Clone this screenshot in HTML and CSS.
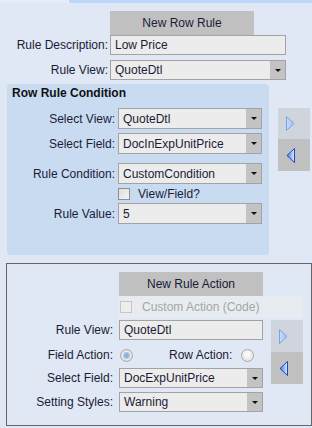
FILE: index.html
```html
<!DOCTYPE html>
<html lang="en">
<head>
    <meta charset="UTF-8">
    <meta name="viewport" content="width=device-width, initial-scale=1.0">
    <title>Row Rules</title>
    <link rel="stylesheet" href="styles.css">
</head>
<body>
    <div class="topbar">
        <div class="topbar-left"></div>
        <div class="topbar-right"></div>
    </div>

    <div class="rule">
        <div class="btn">New Row Rule</div>
        <div class="row">
            <span class="label">Rule Description:</span>
            <div class="field"><span class="value">Low Price</span></div>
        </div>
        <div class="row gap5">
            <span class="label">Rule View:</span>
            <div class="field"><span class="value">QuoteDtl</span><span class="drop"></span></div>
        </div>
    </div>

    <div class="condition-area">
        <div class="condition">
            <h2>Row Rule Condition</h2>
            <div class="row first">
                <span class="label">Select View:</span>
                <div class="field"><span class="value">QuoteDtl</span><span class="drop"></span></div>
            </div>
            <div class="row gap4">
                <span class="label">Select Field:</span>
                <div class="field"><span class="value">DocInExpUnitPrice</span><span class="drop"></span></div>
            </div>
            <div class="row gap9">
                <span class="label">Rule Condition:</span>
                <div class="field"><span class="value">CustomCondition</span><span class="drop"></span></div>
            </div>
            <div class="check-row">
                <span class="checkbox"></span>
                <span class="check-text">View/Field?</span>
            </div>
            <div class="row">
                <span class="label">Rule Value:</span>
                <div class="field"><span class="value">5</span><span class="drop"></span></div>
            </div>
        </div>
        <div class="arrows">
            <div class="arrow-cell light">
                <svg width="9" height="15" viewBox="0 0 9 15">
                    <defs>
                        <linearGradient id="gr1" x1="0" y1="0" x2="1" y2="0">
                            <stop offset="0" stop-color="#c9ddfb"/>
                            <stop offset="1" stop-color="#9dbdf0"/>
                        </linearGradient>
                    </defs>
                    <polygon points="0.5,0.5 8,7.5 0.5,14.5" fill="url(#gr1)" stroke="#7aa3e4"/>
                </svg>
            </div>
            <div class="arrow-cell dark">
                <svg width="9" height="15" viewBox="0 0 9 15">
                    <defs>
                        <linearGradient id="gl1" x1="0" y1="0" x2="1" y2="0">
                            <stop offset="0" stop-color="#3a76e6"/>
                            <stop offset="1" stop-color="#e4eeff"/>
                        </linearGradient>
                    </defs>
                    <polygon points="8.5,0.5 1,7.5 8.5,14.5" fill="url(#gl1)" stroke="#1846c4"/>
                </svg>
            </div>
        </div>
    </div>

    <div class="action">
        <div class="action-head">
            <div class="btn">New Rule Action</div>
            <div class="custom">
                <span class="checkbox disabled"></span>
                <span class="custom-text">Custom Action (Code)</span>
            </div>
        </div>
        <div class="action-body">
            <div class="action-form">
                <div class="row">
                    <span class="label">Rule View:</span>
                    <div class="field"><span class="value">QuoteDtl</span></div>
                </div>
                <div class="radio-row">
                    <span class="label">Field Action:</span>
                    <span class="radio on"></span>
                    <span class="radio-label">Row Action:</span>
                    <span class="radio"></span>
                </div>
                <div class="row gap4">
                    <span class="label">Select Field:</span>
                    <div class="field"><span class="value">DocExpUnitPrice</span><span class="drop"></span></div>
                </div>
                <div class="row gap4">
                    <span class="label">Setting Styles:</span>
                    <div class="field"><span class="value">Warning</span><span class="drop"></span></div>
                </div>
            </div>
            <div class="arrows">
                <div class="arrow-cell light tall">
                    <svg width="9" height="15" viewBox="0 0 9 15">
                        <defs>
                            <linearGradient id="gr2" x1="0" y1="0" x2="1" y2="0">
                                <stop offset="0" stop-color="#c9ddfb"/>
                                <stop offset="1" stop-color="#9dbdf0"/>
                            </linearGradient>
                        </defs>
                        <polygon points="0.5,0.5 8,7.5 0.5,14.5" fill="url(#gr2)" stroke="#7aa3e4"/>
                    </svg>
                </div>
                <div class="arrow-cell dark">
                    <svg width="9" height="15" viewBox="0 0 9 15">
                        <defs>
                            <linearGradient id="gl2" x1="0" y1="0" x2="1" y2="0">
                                <stop offset="0" stop-color="#3a76e6"/>
                                <stop offset="1" stop-color="#e4eeff"/>
                            </linearGradient>
                        </defs>
                        <polygon points="8.5,0.5 1,7.5 8.5,14.5" fill="url(#gl2)" stroke="#1846c4"/>
                    </svg>
                </div>
            </div>
        </div>
    </div>
</body>
</html>
```

FILE: styles.css
```css
body {
    margin: 0;
    background-color: #dfe8f4;
    font-family: "Liberation Sans", Arial, sans-serif;
    font-size: 12px;
    color: #1b1b36;
    width: 312px;
    height: 428px;
    overflow: hidden;
}
.topbar {
    display: flex;
    height: 3px;
}
.topbar-left {
    width: 69px;
    background-color: #e4eefa;
}
.topbar-right {
    flex: 1;
    background-color: #bbd8fa;
}
.btn {
    width: 144px;
    height: 24px;
    background-color: #c0c0c0;
    display: flex;
    align-items: center;
    justify-content: center;
}
.row {
    display: flex;
    align-items: center;
}
.gap4 {
    margin-top: 4px;
}
.gap5 {
    margin-top: 5px;
}
.gap9 {
    margin-top: 9px;
}
.label {
    flex: none;
    box-sizing: border-box;
    text-align: right;
    white-space: nowrap;
}
.field {
    box-sizing: border-box;
    height: 20px;
    border: 1px solid #a3a3a3;
    background-color: #ececec;
    display: flex;
    align-items: stretch;
}
.value {
    flex: 1;
    display: flex;
    align-items: center;
    padding-left: 4px;
}
.drop {
    width: 15px;
    background-color: #c3c3c3;
    display: flex;
    align-items: center;
    justify-content: center;
}
.drop::after {
    content: "";
    border-left: 3px solid transparent;
    border-right: 3px solid transparent;
    border-top: 3px solid #111;
}

/* top rule section */
.rule {
    padding-top: 8px;
}
.rule .btn {
    margin-left: 110px;
}
.rule .label {
    width: 110px;
    padding-right: 2px;
}
.rule .field {
    width: 176px;
}

/* condition panel */
.condition-area {
    display: flex;
    margin-top: 4px;
    padding-left: 7px;
}
.condition {
    box-sizing: border-box;
    width: 262px;
    height: 171px;
    background-color: #c9dbf0;
    border-radius: 4px;
    padding-top: 2px;
}
.condition h2 {
    margin: 0;
    font-size: 12px;
    line-height: 15px;
    padding-left: 5px;
    color: #111;
}
.condition .first {
    margin-top: 7px;
}
.condition .label {
    width: 111px;
    padding-right: 3px;
}
.condition .field {
    width: 144px;
    height: 21px;
}
.check-row {
    display: flex;
    align-items: center;
    height: 19px;
    padding-left: 111px;
}
.checkbox {
    box-sizing: border-box;
    width: 12px;
    height: 12px;
    border: 1px solid #8e8e8e;
    background: linear-gradient(135deg, #dcdcdc, #f6f6f6);
}
.checkbox.disabled {
    border-color: #c6c6c6;
    background: #eeeeee;
}
.check-text {
    margin-left: 8px;
}
.arrows {
    flex: none;
    width: 32px;
    margin-left: 9px;
    margin-top: 24px;
}
.arrow-cell {
    height: 31px;
    display: flex;
    align-items: center;
    padding-left: 8px;
}
.arrow-cell.tall {
    height: 32px;
}
.arrow-cell.dark {
    height: 32px;
    background-color: #c0c0c0;
}
.arrow-cell.light {
    background-color: #d0d4dc;
}

/* action box */
.action {
    box-sizing: border-box;
    width: 306px;
    height: 163px;
    margin: 8px 0 0 6px;
    border: 1px solid #666;
}
.action-head {
    padding: 8px 0 0 112px;
}
.custom {
    width: 184px;
    height: 22px;
    background-color: #e8ecf1;
    display: flex;
    align-items: center;
}
.custom .checkbox {
    margin-left: 1px;
}
.custom-text {
    margin-left: 10px;
    color: #a5a5a5;
}
.action-body {
    display: flex;
    margin-top: 2px;
}
.action .label {
    width: 112px;
    padding-right: 6px;
}
.action .field {
    width: 144px;
}
.action .arrows {
    margin-left: 8px;
    margin-top: 0;
}
.radio-row {
    display: flex;
    align-items: center;
    height: 18px;
    margin-top: 6px;
}
.radio {
    box-sizing: border-box;
    width: 13px;
    height: 13px;
    margin-left: 1px;
    border: 1px solid #a8a8a8;
    border-radius: 50%;
    background: radial-gradient(circle at 50% 40%, #ffffff, #dcdcdc);
}
.radio.on {
    background: radial-gradient(circle, #7ea6d6 0, #a9c4e4 3px, #ededed 4px, #d6d6d6 6px);
}
.radio-label {
    margin-left: 36px;
    margin-right: 8px;
}
```
